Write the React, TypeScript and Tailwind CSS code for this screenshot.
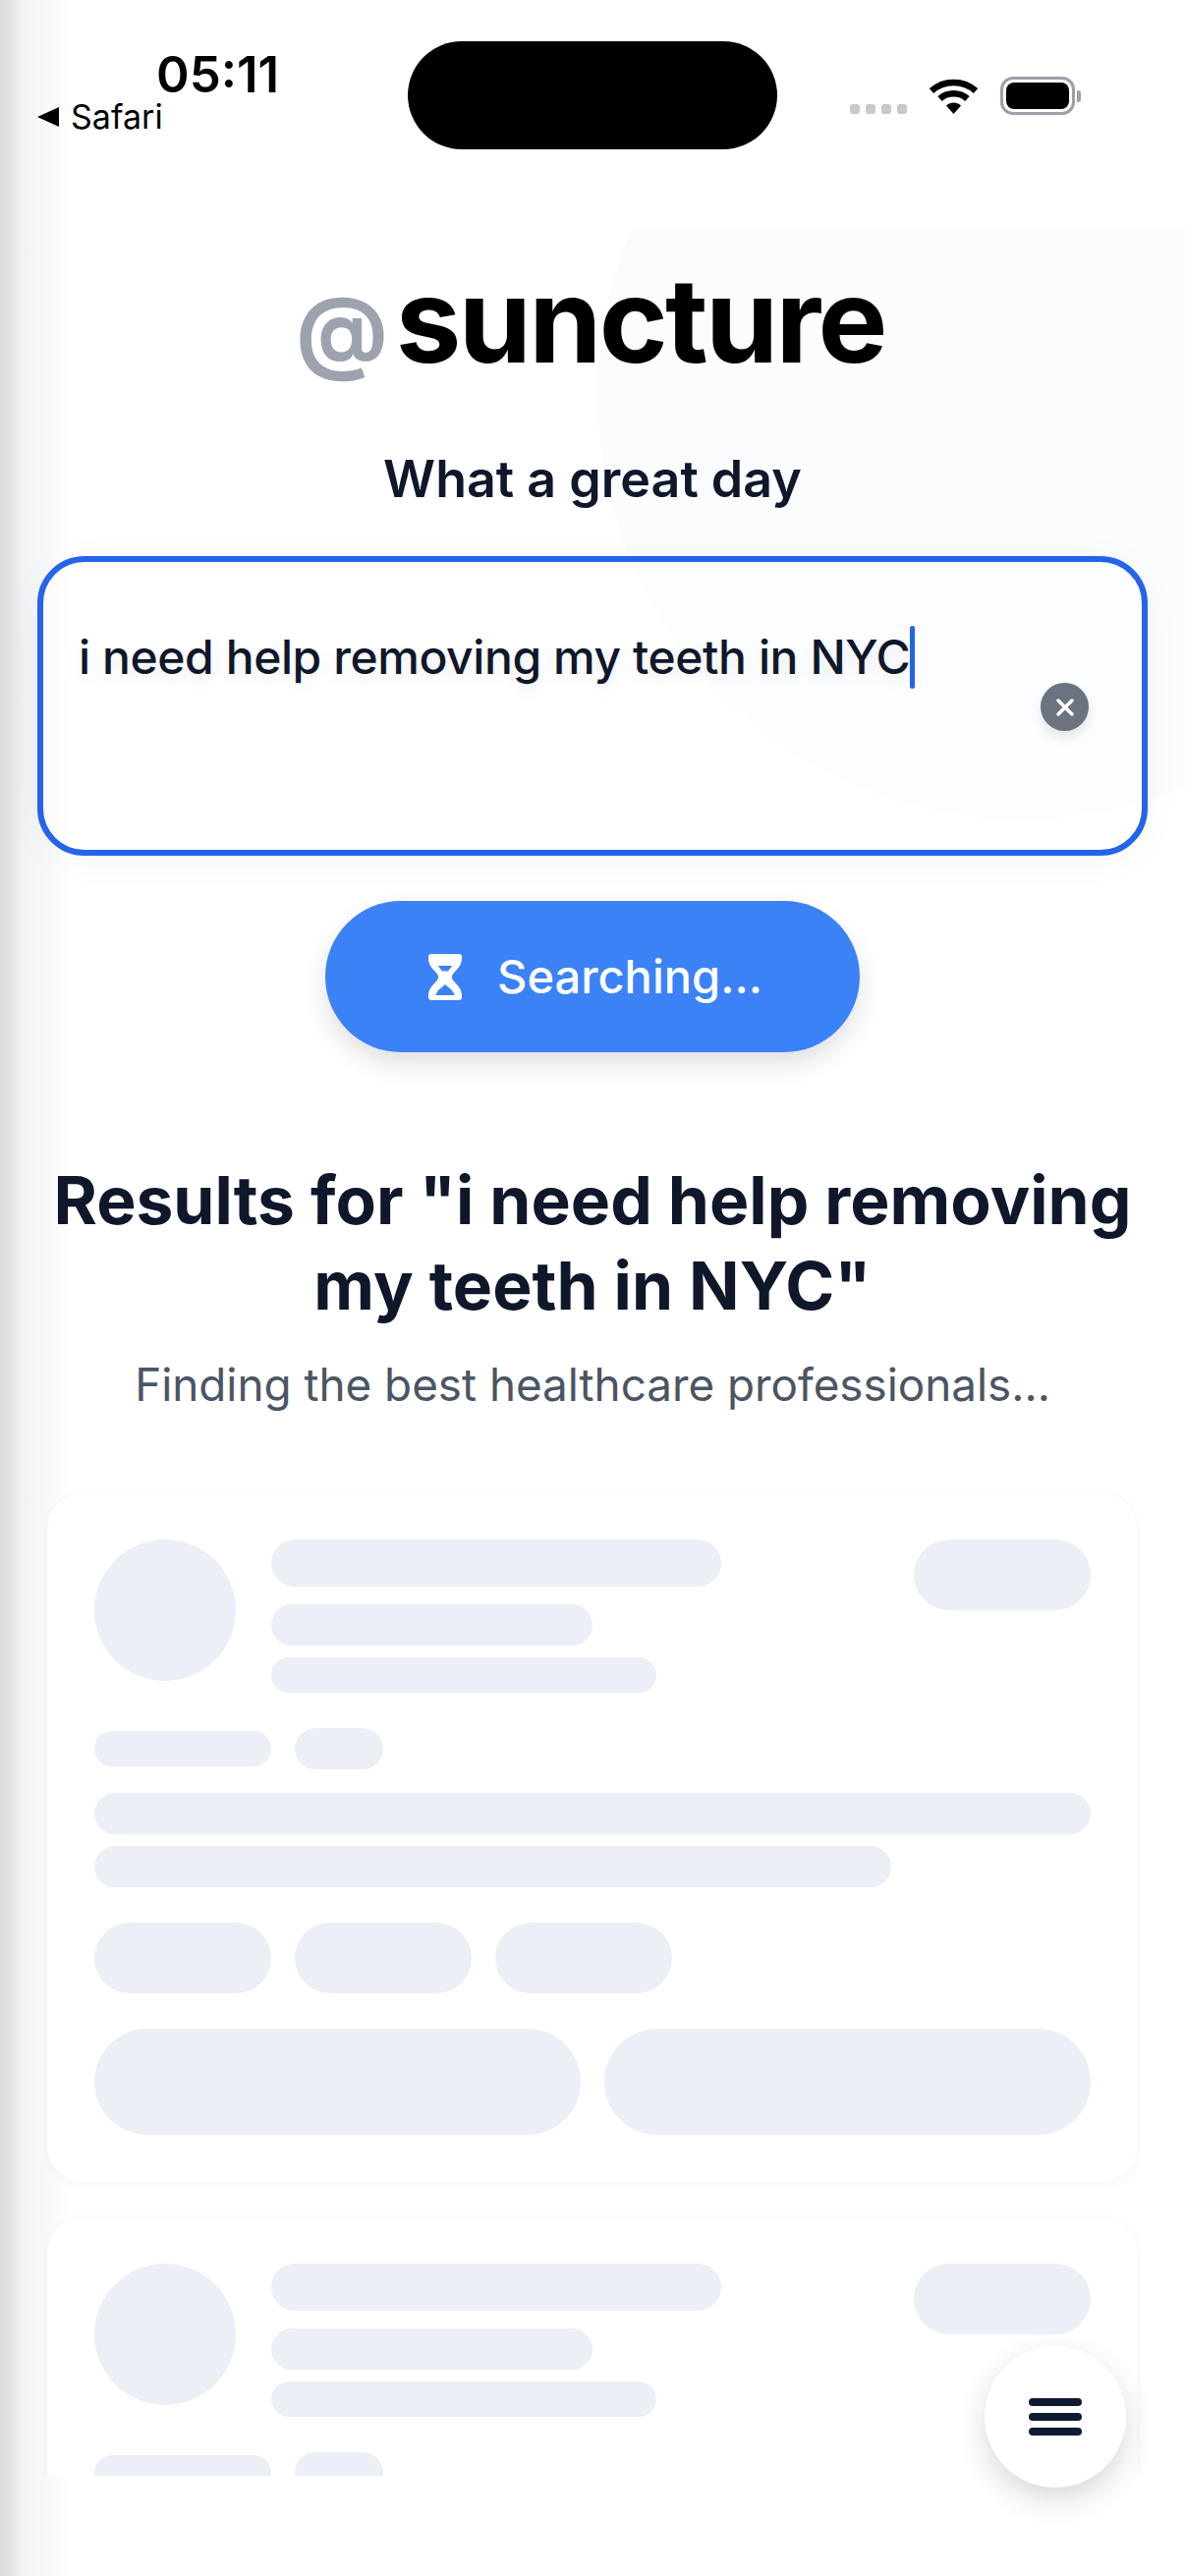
import React from "react";

function Bar({ className }: { className: string }) {
  return <div className={`shrink-0 rounded-full bg-[#eceff6] ${className}`} />;
}

function SkeletonCard() {
  return (
    <div className="flex w-[1110px] shrink-0 flex-col rounded-[36px] border border-[#f9fafc] bg-white p-[47px] shadow-[0_3px_12px_rgba(15,23,42,0.035)]">
      <div className="flex items-start">
        <Bar className="h-[144px] w-[144px]" />
        <div className="ml-[36px] flex flex-col">
          <Bar className="h-[48px] w-[458px]" />
          <Bar className="mt-[18px] h-[42px] w-[327px]" />
          <Bar className="mt-[12px] h-[36px] w-[392px]" />
        </div>
        <Bar className="ml-auto h-[72px] w-[180px]" />
      </div>
      <div className="mt-[36px] flex items-center gap-[24px]">
        <Bar className="h-[36px] w-[180px]" />
        <Bar className="h-[42px] w-[90px]" />
      </div>
      <Bar className="mt-[24px] h-[42px] w-full" />
      <Bar className="mt-[12px] h-[42px] w-[811px]" />
      <div className="mt-[36px] flex gap-[24px]">
        <Bar className="h-[72px] w-[180px]" />
        <Bar className="h-[72px] w-[180px]" />
        <Bar className="h-[72px] w-[180px]" />
      </div>
      <div className="mt-[36px] flex gap-[24px]">
        <Bar className="h-[108px] flex-1" />
        <Bar className="h-[108px] flex-1" />
      </div>
    </div>
  );
}

function Wifi() {
  return (
    <svg width="51" height="38" viewBox="0 0 51 38" className="block">
      <path d="M3 14.5C15.5 3 35.5 3 48 14.5" fill="none" stroke="#000" strokeWidth="6.5" />
      <path d="M11.5 22.5C19 15.5 32 15.5 39.5 22.5" fill="none" stroke="#000" strokeWidth="6.5" />
      <path d="M18 29.5C22 25.6 29 25.6 33 29.5L25.5 38Z" fill="#000" />
    </svg>
  );
}

function Battery() {
  return (
    <div className="flex items-center">
      <div className="flex h-[39px] w-[76px] rounded-[13px] border-[3px] border-[#9ca0aa] bg-white p-[3px]">
        <div className="flex-1 rounded-[8px] bg-black" />
      </div>
      <div className="ml-[2px] h-[12px] w-[4px] rounded-r-[3px] bg-[#9ca0aa]" />
    </div>
  );
}

function Hourglass() {
  return (
    <svg width="34" height="47" viewBox="0 0 34 47" className="block">
      <path
        fillRule="evenodd"
        fill="#fff"
        d="M3 0H31C33 0 34 1 34 3V5C34 10 31 14 27 18C25 20 24 21.5 24 23.5C24 25.5 25 27 27 29C31 33 34 37 34 42V44C34 46 33 47 31 47H3C1 47 0 46 0 44V42C0 37 3 33 7 29C9 27 10 25.5 10 23.5C10 21.5 9 20 7 18C3 14 0 10 0 5V3C0 1 1 0 3 0ZM10 12H24C23 14 21 16 20 17.5H14C13 16 11 14 10 12ZM17 31C15 33 12 35 10 37C9 38.5 8 40 7.5 42H26.5C26 40 25 38.5 24 37C22 35 19 33 17 31Z"
      />
    </svg>
  );
}

export default function App() {
  return (
    <div className="relative h-[2622px] w-[1206px] overflow-hidden bg-white font-['Inter',sans-serif] text-[#0f172a]">
      <div className="pointer-events-none absolute top-0 left-0 h-full w-[72px] bg-linear-to-r from-[#dddddd] from-[6%] via-[#f1f2f4] via-[32%] to-white/0" />

      <div className="relative flex h-[233px] items-start">
        <div className="flex w-[415px] flex-col pt-[51px] pl-[38px] text-black">
          <div className="pl-[121px] text-[51px] leading-[50px] font-semibold">05:11</div>
          <div className="flex h-[36px] items-center gap-[12px]">
            <svg width="22" height="20" viewBox="0 0 22 20" className="block">
              <path d="M22 0V20L0 10Z" fill="#000" />
            </svg>
            <span className="text-[34px] leading-[36px]">Safari</span>
          </div>
        </div>
        <div className="mt-[42px] h-[110px] w-[376px] rounded-[55px] bg-black" />
        <div className="mt-[78px] ml-[74px] flex items-start">
          <div className="mt-[28px] flex gap-[6px]">
            <div className="h-[10px] w-[10px] rounded-[3px] bg-[#c9c9c9]" />
            <div className="h-[10px] w-[10px] rounded-[3px] bg-[#c9c9c9]" />
            <div className="h-[10px] w-[10px] rounded-[3px] bg-[#c9c9c9]" />
            <div className="h-[10px] w-[10px] rounded-[3px] bg-[#c9c9c9]" />
          </div>
          <div className="ml-[22px]">
            <Wifi />
          </div>
          <div className="ml-[22px]">
            <Battery />
          </div>
        </div>
      </div>

      <main className="relative flex h-[2287px] flex-col items-center overflow-hidden">
        <div className="absolute top-[-263px] left-[608px] h-[864px] w-[864px] rounded-full bg-[#fbfcfe]" />

        <div className="relative mt-[21px] flex h-[144px] shrink-0 items-baseline justify-center pr-[4px] leading-[144px] font-bold">
          <span className="text-[92px] text-[#9ca3af]">@</span>
          <span className="ml-[8px] text-[119px] tracking-[-2.6px] text-black">suncture</span>
        </div>

        <h2 className="relative mt-[58px] shrink-0 text-[52px] leading-[64px] font-semibold">What a great day</h2>

        <div className="relative mt-[46px] flex h-[305px] w-[1130px] shrink-0 items-start rounded-[48px] border-[6px] border-[#2563eb] bg-white/40 pt-[65px] pl-[36px] shadow-[0_6px_40px_rgba(15,23,42,0.035)]">
          <span className="text-[48px] leading-[64px] font-medium tracking-[-0.42px] [text-shadow:0_6px_16px_rgba(15,23,42,0.08)]">
            i need help removing my teeth in NYC
          </span>
          <span className="h-[64px] w-[5px] rounded-full bg-[#2563eb]" />
          <button className="absolute top-[123px] right-[54px] flex h-[49px] w-[49px] items-center justify-center rounded-full bg-[#6b7280] shadow-[0_6px_12px_rgba(15,23,42,0.1)]">
            <svg width="20" height="20" viewBox="0 0 20 20" className="block">
              <path d="M3 3L17 17M17 3L3 17" stroke="#fff" strokeWidth="3.5" strokeLinecap="round" />
            </svg>
          </button>
        </div>

        <button className="relative mt-[46px] flex h-[154px] w-[544px] shrink-0 items-center justify-center gap-[36px] rounded-full bg-[#3b82f6] pl-[6px] text-white shadow-[0_12px_24px_rgba(15,23,42,0.13)]">
          <Hourglass />
          <span className="text-[47px] leading-[64px] font-medium">Searching...</span>
        </button>

        <h1 className="relative mt-[107px] w-[1130px] shrink-0 text-center text-[67.7px] leading-[87px] font-bold">
          Results for "i need help removing
          <br />
          my teeth in NYC"
        </h1>
        <p className="relative mt-[26px] shrink-0 text-[45.8px] leading-[64px] text-[#4b5563]">
          Finding the best healthcare professionals...
        </p>

        <div className="relative mt-[77px] flex shrink-0 flex-col gap-[35px]">
          <SkeletonCard />
          <SkeletonCard />
        </div>
      </main>

      <button className="absolute top-[2388px] left-[1002px] flex h-[144px] w-[144px] flex-col items-center justify-center gap-[7px] rounded-full bg-white shadow-[0_12px_30px_rgba(15,23,42,0.16)]">
        <span className="h-[8px] w-[54px] rounded-full bg-[#111a33]" />
        <span className="h-[8px] w-[54px] rounded-full bg-[#111a33]" />
        <span className="h-[8px] w-[54px] rounded-full bg-[#111a33]" />
      </button>
    </div>
  );
}
